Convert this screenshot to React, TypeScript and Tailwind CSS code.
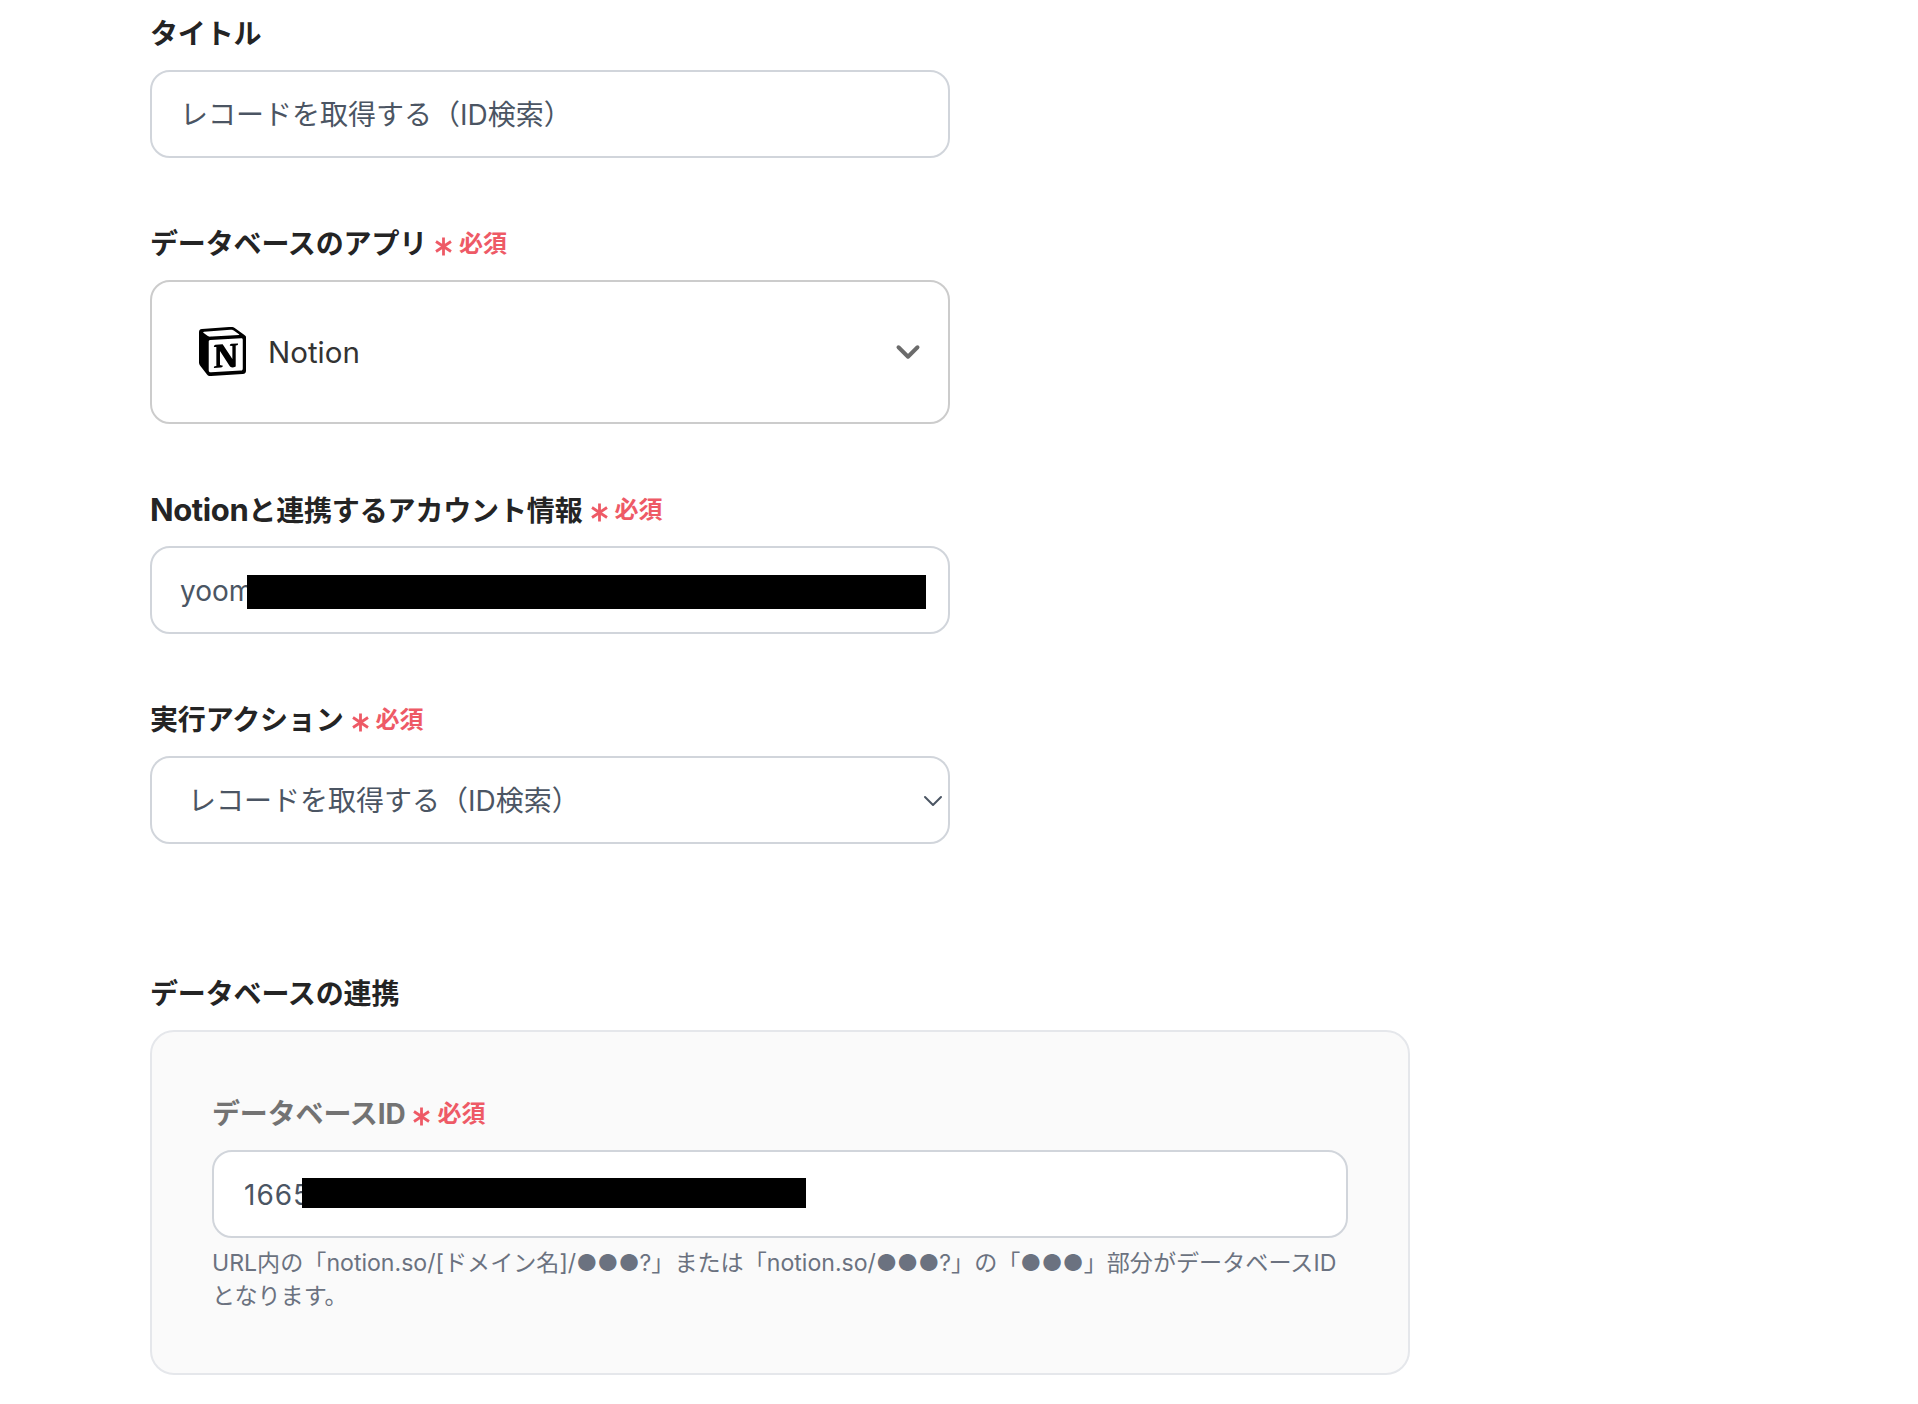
import React from 'react';
import { ChevronDown } from 'lucide-react';
import { SiNotion } from 'react-icons/si';

const FONT = "font-['Inter','Noto_Sans_CJK_JP',sans-serif]";

const Required: React.FC = () => (
  <span className="ml-[8px] flex items-center text-[#ee5a66]">
    <svg width="17" height="19" viewBox="0 0 17 19" className="mt-[5px]" stroke="currentColor" strokeWidth="2.8" fill="none">
      <path d="M8.5 0.5V18.5M1 4.5L16 14.5M16 4.5L1 14.5" />
    </svg>
    <span className="ml-[7px] text-[24px] font-bold">必須</span>
  </span>
);

const Label: React.FC<{ children: React.ReactNode; required?: boolean; muted?: boolean }> = ({ children, required, muted }) => (
  <div className="mb-4 flex h-10 items-center">
    <span className={`text-[28px] font-bold tracking-[-0.15px] ${muted ? 'text-[#737373]' : 'text-[#242424]'}`}>
      {children}
    </span>
    {required && <Required />}
  </div>
);

// 黒塗りは入力値の上に重ねる
const Redact: React.FC<{ className: string }> = ({ className }) => (
  <div className={`absolute bg-black ${className}`} />
);

export default function App() {
  return (
    <div className={`${FONT} h-[1404px] overflow-hidden bg-white pl-[150px] pt-[14px]`}>
      <div className="w-[800px]">
        <Label>タイトル</Label>
        <div className="flex h-[88px] items-center rounded-[20px] border-2 border-[#d1d5db] pl-[28px] pt-[1px] text-[28px] text-[#4b5563]">
          レコードを取得する（ID検索）
        </div>

        <div className="mt-[66px]">
          <Label required>データベースのアプリ</Label>
          <div className="flex h-[144px] items-center rounded-[20px] border-2 border-[#cccccc] pl-[46px] pr-[21px]">
            <SiNotion size={49} className="-mt-[2px] text-black" />
            <span className="ml-[21px] text-[29.5px] text-[#333333]">Notion</span>
            <ChevronDown size={38} strokeWidth={2.5} className="ml-auto text-[#6b6b6b]" />
          </div>
        </div>

        <div className="mt-[66px]">
          <Label required>
            <span className="text-[31px] tracking-[-0.4px]">Notion</span>と連携するアカウント情報
          </Label>
          <div className="relative flex h-[88px] items-center rounded-[20px] border-2 border-[#d1d5db] pl-[28px] pt-[1px] text-[28px] text-[#4b5563]">
            yoom
            <Redact className="left-[95px] top-[27px] h-[34px] w-[679px]" />
          </div>
        </div>

        <div className="mt-[66px]">
          <Label required>実行アクション</Label>
          <div className="flex h-[88px] items-center rounded-[20px] border-2 border-[#d1d5db] pl-[36px] pt-[1px] text-[28px] text-[#4b5563]">
            レコードを取得する（ID検索）
            <ChevronDown size={32} strokeWidth={1.5} className="-mr-[1px] ml-auto text-[#4b5563]" />
          </div>
        </div>
      </div>

      <div className="mt-[130px]">
        <Label>データベースの連携</Label>
      </div>
      <div className="mt-[2px] h-[345px] w-[1260px] rounded-[24px] border-2 border-[#e5e7eb] bg-[#fafafa] pl-[60px] pr-[60px] pt-[62px]">
        <Label required muted>データベースID</Label>
        <div className="relative flex h-[88px] items-center rounded-[20px] border-2 border-[#d1d5db] bg-white pl-[30px] pt-[1px] text-[28px] tracking-[1px] text-[#4b5563]">
          1665
          <Redact className="left-[88px] top-[26px] h-[30px] w-[504px]" />
        </div>
        <p className="mt-[9px] text-[23.1px] leading-[33px] text-[#6b7280]">
          URL内の「notion.so/[ドメイン名]/●●●?」または「notion.so/●●●?」の「●●●」部分がデータベースID
          <br />
          となります。
        </p>
      </div>
    </div>
  );
}
